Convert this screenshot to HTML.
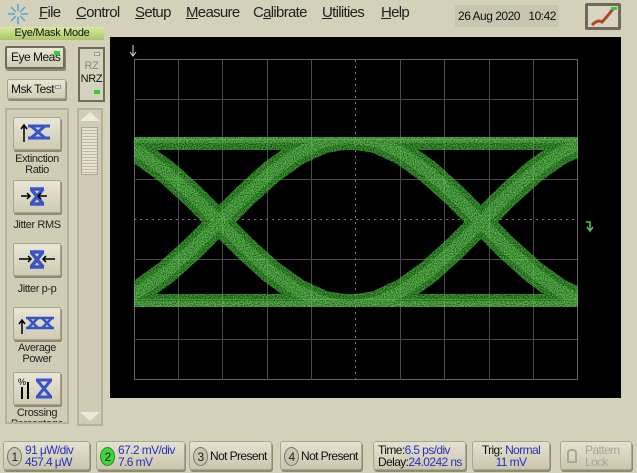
<!DOCTYPE html>
<html><head><meta charset="utf-8"><style>
*{margin:0;padding:0;box-sizing:border-box}
body{width:637px;height:473px;background:#d4d1bb;position:relative;overflow:hidden;font-family:"Liberation Sans",sans-serif;color:#111}
.a{position:absolute}
.menu{top:4px;font-size:15px;color:#222;letter-spacing:-0.7px}
.menu u{text-decoration:underline}
.btn{position:absolute;background:linear-gradient(#e8e6d6,#cfcbb3);border:1px solid #a9a58e;box-shadow:1px 2px 0 #8e8a74;border-radius:2px}
.lbl{position:absolute;font-size:11px;text-align:center;color:#222;line-height:11px;letter-spacing:-0.4px}
.bb{position:absolute;top:441px;height:29px;background:linear-gradient(#e4e2d0,#cbc7ae);border:1px solid #aaa68f;box-shadow:1px 2px 0 #8e8a74;border-radius:3px;font-size:12px;line-height:12px;letter-spacing:-0.6px}
.num{position:absolute;left:3px;top:5px;width:15px;height:19px;border-radius:50%;background:#c9c5b0;border:1px solid #777;font-size:12px;text-align:center;line-height:18px;color:#222}
.blue{color:#2730c0}
</style></head><body>
<svg class="a" style="left:6px;top:3px" width="24" height="22" viewBox="0 0 24 22"><g stroke="#5aa3d8" stroke-width="1.5"><line x1="12" y1="1" x2="12" y2="21"/><line x1="2" y1="11" x2="22" y2="11"/><line x1="5" y1="4" x2="19" y2="18"/><line x1="19" y1="4" x2="5" y2="18"/></g><circle cx="12" cy="11" r="3" fill="#d4d1bb"/></svg>
<div class="a menu" style="left:39px"><u>F</u>ile</div>
<div class="a menu" style="left:76px"><u>C</u>ontrol</div>
<div class="a menu" style="left:135px"><u>S</u>etup</div>
<div class="a menu" style="left:186px"><u>M</u>easure</div>
<div class="a menu" style="left:253px">C<u>a</u>librate</div>
<div class="a menu" style="left:322px"><u>U</u>tilities</div>
<div class="a menu" style="left:381px"><u>H</u>elp</div>
<div class="a" style="left:455px;top:5px;width:104px;height:22px;background:#c8c5b0;font-size:12px;line-height:22px;text-align:center;letter-spacing:-0.5px">26 Aug 2020 &nbsp; 10:42</div>
<div class="a" style="left:585px;top:3px;width:36px;height:27px;border:3px solid #6d6a5c;background:#d8d5c3;border-radius:2px"><svg width="30" height="21"><path d="M4 19 Q10 13 14 16 Q18 12 25 3" stroke="#b0462a" stroke-width="3" fill="none"/><rect x="23" y="1" width="6" height="3" fill="#3c3"/></svg></div>

<div class="a" style="left:0;top:27px;width:104px;height:13px;background:linear-gradient(#d8eb9c,#a9c468);font-size:11px;line-height:13px;text-align:center;letter-spacing:-0.3px">Eye/Mask Mode</div>
<div class="btn" style="left:5px;top:46px;width:60px;height:23px;border:2px solid #6f6c5c;font-size:12px;line-height:19px;padding-left:4px;letter-spacing:-0.5px">Eye Meas<span style="position:absolute;right:3px;top:3px;width:6px;height:4px;background:#3c3"></span></div>
<div class="btn" style="left:7px;top:79px;width:59px;height:20px;font-size:12px;line-height:19px;padding-left:3px;letter-spacing:-0.5px">Msk Test<span style="position:absolute;right:4px;top:5px;width:6px;height:4px;background:#ddd;border:1px solid #999"></span></div>
<div class="a" style="left:78px;top:47px;width:27px;height:55px;border:2px solid #6f6c5c;background:#d5d2bd;font-size:11px;text-align:center;line-height:13px;padding-top:11px;letter-spacing:-0.3px"><span style="color:#888">RZ</span><br>NRZ<span style="position:absolute;left:14px;top:3px;width:6px;height:4px;border:1px solid #999;background:#ddd"></span><span style="position:absolute;left:14px;top:41px;width:6px;height:4px;background:#3c3"></span></div>

<div class="a" style="left:5px;top:108px;width:64px;height:316px;border:2px solid #b6b29c;overflow:hidden;background:#d0cdb6">
<div class="btn" style="left:6px;top:7px;width:48px;height:33px"><svg width="46" height="31"><path d="M14 8h22M14 20h22M17 8l14 12M31 8L17 20" stroke="#3854c8" stroke-width="3"/><path d="M10 24V8M7 11l3-4 3 4" stroke="#000" stroke-width="1.5" fill="none"/></svg></div>
<div class="lbl" style="left:0;top:44px;width:60px">Extinction<br>Ratio</div>
<div class="btn" style="left:6px;top:70px;width:48px;height:33px"><svg width="46" height="31"><path d="M16 8h14M16 23h14M17 8l12 15M29 8L17 23" stroke="#3854c8" stroke-width="3.5"/><path d="M7 15h9M33 15h-9M13 12l3 3-3 3M27 12l-3 3 3 3" stroke="#000" stroke-width="1.5" fill="none"/></svg></div>
<div class="lbl" style="left:0;top:110px;width:60px">Jitter RMS</div>
<div class="btn" style="left:6px;top:133px;width:48px;height:33px"><svg width="46" height="31"><path d="M16 8h14M16 23h14M17 8l12 15M29 8L17 23" stroke="#3854c8" stroke-width="3.5"/><path d="M5 15h12M41 15h-12M14 12l3 3-3 3M32 12l-3 3 3 3" stroke="#000" stroke-width="1.5" fill="none"/></svg></div>
<div class="lbl" style="left:0;top:174px;width:60px">Jitter p-p</div>
<div class="btn" style="left:6px;top:197px;width:48px;height:33px"><svg width="46" height="31"><path d="M12 10h28M12 20h28M14 10l10 10M24 10L14 20M28 10l10 10M38 10L28 20" stroke="#3854c8" stroke-width="2.5"/><path d="M8 26V13M5 16l3-4 3 4" stroke="#000" stroke-width="1.5" fill="none"/></svg></div>
<div class="lbl" style="left:0;top:233px;width:60px">Average<br>Power</div>
<div class="btn" style="left:6px;top:262px;width:48px;height:33px"><svg width="46" height="31"><path d="M22 7h16M22 24h16M23 7l14 17M37 7L23 24" stroke="#3854c8" stroke-width="3"/><text x="4" y="12" font-size="9" font-family="Liberation Sans">%</text><path d="M8 26V14M14 26V9" stroke="#000" stroke-width="2"/></svg></div>
<div class="lbl" style="left:0;top:298px;width:60px">Crossing<br>Percentage</div>
</div>
<div class="a" style="left:77px;top:108px;width:26px;height:318px;border:2px solid #b6b29c;background:#cfcbb4">
<div class="a" style="left:1px;top:2px;width:0;height:0;border-left:10px solid transparent;border-right:10px solid transparent;border-bottom:9px solid #ece9da"></div>
<div class="a" style="left:2px;top:17px;width:17px;height:48px;background:repeating-linear-gradient(#e6e3d3 0 2px,#bdb9a2 2px 3px);border:1px solid #aaa690"></div>
<div class="a" style="left:1px;bottom:3px;width:0;height:0;border-left:10px solid transparent;border-right:10px solid transparent;border-top:9px solid #ece9da"></div>
</div>

<div class="a" style="left:110px;top:37px;width:511px;height:361px;background:#000"></div>
<svg class="a" style="left:110px;top:37px" width="511" height="361" viewBox="110 37 511 361">
<defs>
<filter id="n" x="0" y="0" width="1" height="1"><feTurbulence type="fractalNoise" baseFrequency="0.9" numOctaves="1" seed="3"/><feColorMatrix values="0 0 0 0 0  0 0 0 0 0  0 0 0 0 0  0 0 0 -1.4 1.35"/><feComposite in="SourceGraphic" operator="in"/></filter>
<clipPath id="c"><rect x="134" y="40" width="444" height="350"/></clipPath>
</defs>
<g stroke="#4a4a4a" stroke-width="1" fill="none">
<rect x="134.5" y="59.5" width="443" height="320" stroke="#666"/>
<path d="M178.5 60v320M222.5 60v320M267.5 60v320M311.5 60v320M400.5 60v320M444.5 60v320M489.5 60v320M533.5 60v320M134 99.5h443M134 139.5h443M134 179.5h443M134 259.5h443M134 299.5h443M134 339.5h443"/>
<path d="M355.5 60v320M134 219.5h443" stroke="#777" stroke-dasharray="2 4"/>
</g>
<path d="M133 45v10M130 52l3 4 3-4" stroke="#ddd" fill="none"/>
<g clip-path="url(#c)" fill="none" filter="url(#n)" stroke-linejoin="round">
<g stroke="#46b83a" stroke-width="26">
<path d="M120 137H600M120 307H600"/>
</g>
<g stroke-width="24" stroke="#46b83a">
<polyline points="88,307 114.2,302.8 140.4,290.8 166.6,272 192.8,248.3 219,222 245.2,195.7 271.4,172 297.6,153.2 323.8,141.2 350,137 376.2,141.2 402.4,153.2 428.6,172 454.8,195.7 481,222 507.2,248.3 533.4,272 559.6,290.8 585.8,302.8 612,307"/>
<polyline points="88,137 114.2,141.2 140.4,153.2 166.6,172 192.8,195.7 219,222 245.2,248.3 271.4,272 297.6,290.8 323.8,302.8 350,307 376.2,302.8 402.4,290.8 428.6,272 454.8,248.3 481,222 507.2,195.7 533.4,172 559.6,153.2 585.8,141.2 612,137"/>
</g>
</g>
<g clip-path="url(#c)" fill="none" opacity="0.35" stroke="#8ef07a" stroke-width="12" stroke-linejoin="round" filter="url(#n)">
<path d="M120 137H600M120 307H600"/>
<polyline points="88,307 114.2,302.8 140.4,290.8 166.6,272 192.8,248.3 219,222 245.2,195.7 271.4,172 297.6,153.2 323.8,141.2 350,137 376.2,141.2 402.4,153.2 428.6,172 454.8,195.7 481,222 507.2,248.3 533.4,272 559.6,290.8 585.8,302.8 612,307"/>
<polyline points="88,137 114.2,141.2 140.4,153.2 166.6,172 192.8,195.7 219,222 245.2,248.3 271.4,272 297.6,290.8 323.8,302.8 350,307 376.2,302.8 402.4,290.8 428.6,272 454.8,248.3 481,222 507.2,195.7 533.4,172 559.6,153.2 585.8,141.2 612,137"/>
</g>
<path d="M586 222h4v8M587 227l3 4 3-4" stroke="#4c4" fill="none" stroke-width="1.5"/>
</svg>

<div class="bb" style="left:3px;width:87px"><div class="num">1</div><div class="blue" style="position:absolute;left:21px;top:2px">91 μW/div<br>457.4 μW</div></div>
<div class="bb" style="left:96px;width:89px"><div class="num" style="background:#3ed43a;border-color:#2a8a28">2</div><div class="blue" style="position:absolute;left:21px;top:2px">67.2 mV/div<br>7.6 mV</div></div>
<div class="bb" style="left:189px;width:83px"><div class="num">3</div><div style="position:absolute;left:20px;top:8px">Not Present</div></div>
<div class="bb" style="left:280px;width:82px"><div class="num">4</div><div style="position:absolute;left:20px;top:8px">Not Present</div></div>
<div class="bb" style="left:373px;width:93px"><div style="position:absolute;left:4px;top:2px">Time:<span class="blue">6.5 ps/div</span><br>Delay:<span class="blue">24.0242 ns</span></div></div>
<div class="bb" style="left:472px;width:78px;text-align:center;padding-top:2px">Trig: <span class="blue">Normal</span><br><span class="blue">11 mV</span></div>
<div class="bb" style="left:560px;width:72px;color:#aaa79a"><div style="position:absolute;left:6px;top:7px;width:10px;height:14px;border:2px solid #aaa79a;border-radius:4px 4px 1px 1px"></div><div style="position:absolute;left:24px;top:2px">Pattern<br>Lock</div></div>
</body></html>
